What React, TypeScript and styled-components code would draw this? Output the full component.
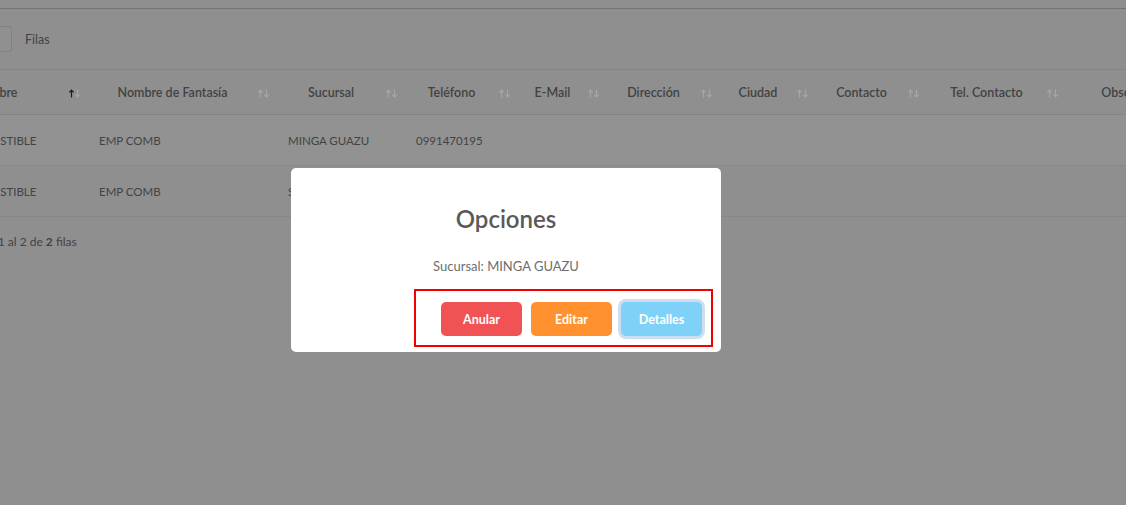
import React from "react";
import styled, { createGlobalStyle } from "styled-components";

const GlobalStyle = createGlobalStyle`
  html, body {
    margin: 0;
    padding: 0;
    background: #dcdcdc;
    overflow: hidden;
  }
  body {
    font-family: Lato, "Noto Sans", sans-serif;
    color: #686868;
  }
`;

const Page = styled.div`
  margin-left: -75px;
  width: 1300px;
`;

const TopBar = styled.div`
  height: 8px;
  border-bottom: 1px solid #b0b3b6;
`;

const Toolbar = styled.div`
  display: flex;
  align-items: center;
  gap: 13px;
  height: 60px;
  padding-left: 12px;
  font-size: 12.5px;
`;

const PageSize = styled.div`
  width: 75px;
  height: 26px;
  box-sizing: border-box;
  border: 1px solid #c6c6c6;
  border-radius: 3px;
  background: #dedede;
`;

const Table = styled.table`
  border-collapse: collapse;
  table-layout: fixed;
`;

const HeadCell = styled.th`
  position: relative;
  height: 44px;
  padding: 0 30px 0 12px;
  border-top: 1px solid #c9cbcd;
  border-bottom: 1px solid #c9cbcd;
  font-size: 12.5px;
  font-weight: 600;
  color: #666666;
  text-align: center;
  white-space: nowrap;
  overflow: hidden;
  &:first-child {
    padding-left: 8px;
  }
`;

const SortIcon = styled.svg`
  position: absolute;
  right: 6px;
  top: 50%;
  margin-top: -3px;
`;

const Row = styled.tr<{ $striped?: boolean }>`
  background: ${(p) => (p.$striped ? "#e1e1e1" : "transparent")};
`;

const Cell = styled.td`
  height: 50px;
  padding: 0 12px;
  border-bottom: 1px solid #cdcfd1;
  font-size: 11.5px;
  color: #686868;
  white-space: nowrap;
  overflow: hidden;
  &:first-child {
    padding-left: 5px;
  }
`;

const Footer = styled.div`
  padding: 17px 12px;
  font-size: 12px;
  color: #686868;
  b {
    font-weight: 700;
  }
`;

const Overlay = styled.div`
  position: fixed;
  inset: 0;
  background: rgba(0, 0, 0, 0.35);
  display: flex;
  align-items: flex-start;
  padding: 168px 0 0 291px;
`;

const Modal = styled.div`
  width: 430px;
  height: 184px;
  box-sizing: border-box;
  background: #fff;
  border-radius: 5px;
  display: flex;
  flex-direction: column;
  align-items: center;
  padding-top: 36px;
`;

const Title = styled.h2`
  margin: 0;
  font-size: 24px;
  line-height: 30px;
  font-weight: 600;
  color: #595959;
`;

const Message = styled.div`
  margin-top: 21px;
  font-size: 13px;
  line-height: 22px;
  color: #6e6e6e;
`;

const Actions = styled.div`
  align-self: flex-end;
  margin: 12px 8px 0 0;
  width: 299px;
  height: 58px;
  box-sizing: border-box;
  border: 2px solid #f00000;
  display: flex;
  justify-content: flex-end;
  align-items: flex-start;
  gap: 9px;
  padding: 11px 9px 0 0;
`;

const Button = styled.button<{ $bg: string; $focused?: boolean }>`
  width: 81px;
  height: 34px;
  border: none;
  border-radius: 5px;
  background: ${(p) => p.$bg};
  color: #fff;
  font-family: Lato, "Noto Sans", sans-serif;
  font-size: 12.5px;
  font-weight: 700;
  cursor: pointer;
  box-shadow: ${(p) => (p.$focused ? "0 0 0 3px rgba(170, 200, 230, 0.6)" : "none")};
`;

const SortArrows = ({ active }: { active?: boolean }) => (
  <SortIcon width="13" height="9" viewBox="0 0 13 9" fill="none">
    <path d="M3.5 8.5V1.2M1.3 3.3L3.5 1l2.2 2.3" stroke={active ? "#2c2c2c" : "#ffffff"} strokeWidth="1.2" />
    <path d="M9.5 0.5v7.3M7.3 5.7L9.5 8l2.2-2.3" stroke="#ffffff" strokeWidth="1.2" />
  </SortIcon>
);

const columns = [
  { title: "Nombre", width: 162 },
  { title: "Nombre de Fantasía", width: 189 },
  { title: "Sucursal", width: 128 },
  { title: "Teléfono", width: 113 },
  { title: "E-Mail", width: 89 },
  { title: "Dirección", width: 113 },
  { title: "Ciudad", width: 96 },
  { title: "Contacto", width: 111 },
  { title: "Tel. Contacto", width: 139 },
  { title: "Observación", width: 160 },
];

const rows = [
  ["EMP COMBUSTIBLE", "EMP COMB", "MINGA GUAZU", "0991470195", "", "", "", "", "", ""],
  ["EMP COMBUSTIBLE", "EMP COMB", "SAN ALBERTO", "", "", "", "", "", "", ""],
];

export default function App() {
  return (
    <>
      <GlobalStyle />
      <Page>
        <TopBar />
        <Toolbar>
          <PageSize />
          <span>Filas</span>
        </Toolbar>
        <Table>
          <colgroup>
            {columns.map((c) => (
              <col key={c.title} style={{ width: c.width }} />
            ))}
          </colgroup>
          <thead>
            <tr>
              {columns.map((c, i) => (
                <HeadCell key={c.title}>
                  {c.title}
                  <SortArrows active={i === 0} />
                </HeadCell>
              ))}
            </tr>
          </thead>
          <tbody>
            {rows.map((r, i) => (
              <Row key={i} $striped={i === 0}>
                {r.map((v, j) => (
                  <Cell key={j}>{v}</Cell>
                ))}
              </Row>
            ))}
          </tbody>
        </Table>
        <Footer>
          Mostrando 1 al 2 de <b>2</b> filas
        </Footer>
      </Page>
      <Overlay>
        <Modal>
          <Title>Opciones</Title>
          <Message>Sucursal: MINGA GUAZU</Message>
          <Actions>
            <Button $bg="#f15355">Anular</Button>
            <Button $bg="#ff922e">Editar</Button>
            <Button $bg="#7fd1f8" $focused>
              Detalles
            </Button>
          </Actions>
        </Modal>
      </Overlay>
    </>
  );
}
